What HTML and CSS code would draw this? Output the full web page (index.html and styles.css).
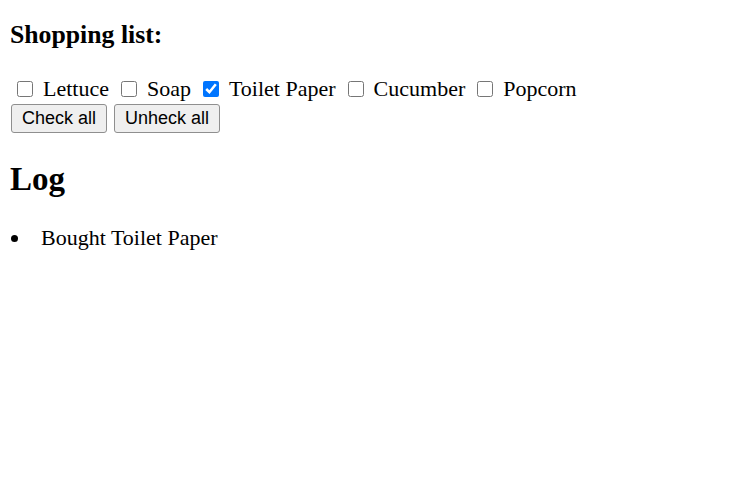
FILE: index.html
```html
<!DOCTYPE html>
<html>
<head>
<meta charset="utf-8">
<link rel="stylesheet" href="styles.css">
</head>
<body>
<h3 class="title">Shopping list:</h3>
<div class="items">
  <label class="item"><input type="checkbox"><span>Lettuce</span></label>
  <label class="item"><input type="checkbox"><span>Soap</span></label>
  <label class="item"><input type="checkbox" checked><span>Toilet Paper</span></label>
  <label class="item"><input type="checkbox"><span>Cucumber</span></label>
  <label class="item"><input type="checkbox"><span>Popcorn</span></label>
</div>
<div class="actions">
  <button class="btn">Check all</button>
  <button class="btn">Unheck all</button>
</div>
<h2 class="log-title">Log</h2>
<ul class="log">
  <li class="log-item">Bought Toilet Paper</li>
</ul>
</body>
</html>
```
FILE: styles.css
```css
body {
  margin: 10px;
  font-family: "Liberation Serif", "Times New Roman", serif;
  font-size: 22px;
  color: #000;
  background: #fff;
}
.title {
  font-size: 25.74px;
  font-weight: bold;
  line-height: 28.5px;
  margin: 11px 0 27px;
}
.items {
  display: flex;
  gap: 12px;
  padding-left: 7px;
  height: 25px;
  line-height: 24.4px;
}
.item {
  display: flex;
  align-items: flex-start;
  gap: 10px;
}
.item input {
  width: 16px;
  height: 16px;
  margin: 4px 0 0;
  accent-color: #0075ff;
}
.actions {
  display: flex;
  gap: 7px;
  margin-top: 2px;
  padding-left: 1px;
}
.btn {
  font-family: "Liberation Sans", Arial, sans-serif;
  font-size: 18px;
  line-height: 21px;
  padding: 3px 10px;
  border: 1px solid #8f8f8f;
  border-radius: 3px;
  background: #efefef;
  color: #000;
}
.log-title {
  font-size: 33px;
  font-weight: bold;
  line-height: 36.5px;
  margin: 28px 0 28.5px;
}
.log {
  margin: 0;
  padding: 0;
  list-style: none;
  line-height: 24.4px;
}
.log-item::before {
  content: "";
  display: inline-block;
  width: 7px;
  height: 7px;
  border-radius: 50%;
  background: #000;
  margin: 0 23px 0 1px;
  vertical-align: 3px;
}
```
